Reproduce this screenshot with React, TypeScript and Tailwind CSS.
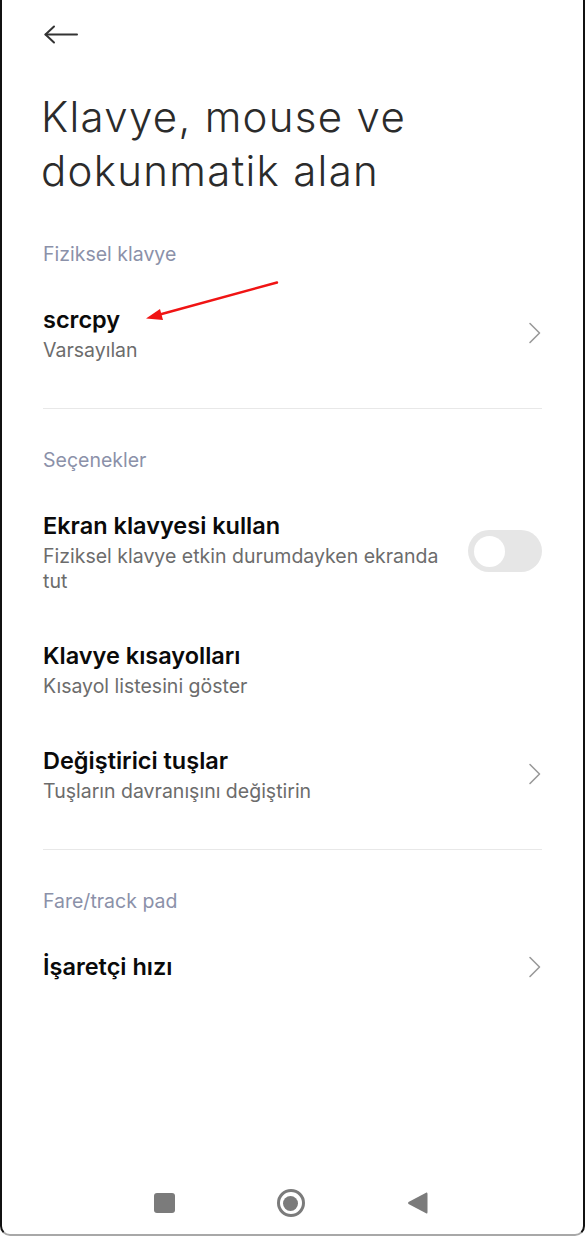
import React from 'react';

const font = { fontFamily: 'Inter, Roboto, "Noto Sans", sans-serif' };

function Chevron() {
  return (
    <svg width="14" height="22" viewBox="0 0 14 22" fill="none" className="shrink-0">
      <path d="M2 1.5 L11.5 11 L2 20.5" stroke="#9a9a9a" strokeWidth="1.6" strokeLinecap="round" strokeLinejoin="round" />
    </svg>
  );
}

function Toggle() {
  return (
    <div className="w-[74px] h-[42px] rounded-full bg-[#e6e6e6] flex items-center px-[6px] shrink-0">
      <div className="w-[31px] h-[31px] rounded-full bg-white" />
    </div>
  );
}

function SectionHeader({ children }: { children: React.ReactNode }) {
  return <div className="h-[50px] flex items-center text-[19.5px] text-[#8b91a9]">{children}</div>;
}

interface RowProps {
  title: string;
  subtitle?: string;
  right?: React.ReactNode;
}

function Row({ title, subtitle, right }: RowProps) {
  return (
    <div className="flex items-center justify-between py-[22px] gap-6">
      <div className="min-w-0">
        <div className="text-[23.5px] leading-[36px] font-semibold text-[#0a0a0a]">{title}</div>
        {subtitle && <div className="text-[19.5px] leading-[25px] text-[#6c6c6c]">{subtitle}</div>}
      </div>
      {right}
    </div>
  );
}

function Divider() {
  return <div className="h-px bg-[#e8e8e8] mt-[23px] mb-[27px]" />;
}

export default function App() {
  return (
    <div className="w-[585px] h-[1237px] bg-white" style={font}>
      <div className="relative w-[585px] h-[1236px] border-x-2 border-b-2 border-x-[#111] border-b-[#a8a8a8] rounded-b-[10px] flex flex-col overflow-hidden">
        {/* top bar */}
        <div className="h-[68px] flex items-center pl-[42px]">
          <svg width="34" height="19" viewBox="0 0 34 19" fill="none">
            <path d="M1.5 9.5 H33" stroke="#333" strokeWidth="2" strokeLinecap="round" />
            <path d="M10 1.5 L1.5 9.5 L10 17.5" stroke="#333" strokeWidth="2" strokeLinecap="round" strokeLinejoin="round" />
          </svg>
        </div>

        <div className="flex-1 px-[41px]">
          <h1 className="mt-[22px] -ml-[2px] text-[42px] leading-[54px] tracking-[1.3px] font-light text-[#2b2b2b]">
            Klavye, mouse ve
            <br />
            dokunmatik alan
          </h1>

          <div className="mt-[32px]">
            <SectionHeader>Fiziksel klavye</SectionHeader>
            <Row title="scrcpy" subtitle="Varsayılan" right={<Chevron />} />
            <Divider />
          </div>

          <div>
            <SectionHeader>Seçenekler</SectionHeader>
            <Row
              title="Ekran klavyesi kullan"
              subtitle="Fiziksel klavye etkin durumdayken ekranda tut"
              right={<Toggle />}
            />
            <Row title="Klavye kısayolları" subtitle="Kısayol listesini göster" />
            <Row title="Değiştirici tuşlar" subtitle="Tuşların davranışını değiştirin" right={<Chevron />} />
            <Divider />
          </div>

          <div>
            <SectionHeader>Fare/track pad</SectionHeader>
            <Row title="İşaretçi hızı" right={<Chevron />} />
          </div>
        </div>

        {/* nav bar */}
        <div className="h-[62px] flex items-center justify-center gap-[102px] pr-[4px]">
          <div className="w-[21px] h-[20px] rounded-[3px] bg-[#7b7b7b]" />
          <div className="w-[28px] h-[28px] rounded-full border-[3px] border-[#7b7b7b] flex items-center justify-center">
            <div className="w-[15px] h-[15px] rounded-full bg-[#7b7b7b]" />
          </div>
          <svg width="21" height="24" viewBox="0 0 21 24">
            <path d="M19.5 1.5 Q20.5 1 20.5 3 V21 Q20.5 23 19.5 22.5 L1.5 13 Q0.5 12 1.5 11 Z" fill="#7b7b7b" />
          </svg>
        </div>

        {/* annotation arrow */}
        <svg className="absolute left-0 top-0 pointer-events-none" width="585" height="400" viewBox="0 0 585 400">
          <line x1="275" y1="282.5" x2="156" y2="315" stroke="#f01414" strokeWidth="2.4" strokeLinecap="round" />
          <path d="M144 318.5 L158 309 L161 320 Z" fill="#f01414" />
        </svg>
      </div>
    </div>
  );
}
